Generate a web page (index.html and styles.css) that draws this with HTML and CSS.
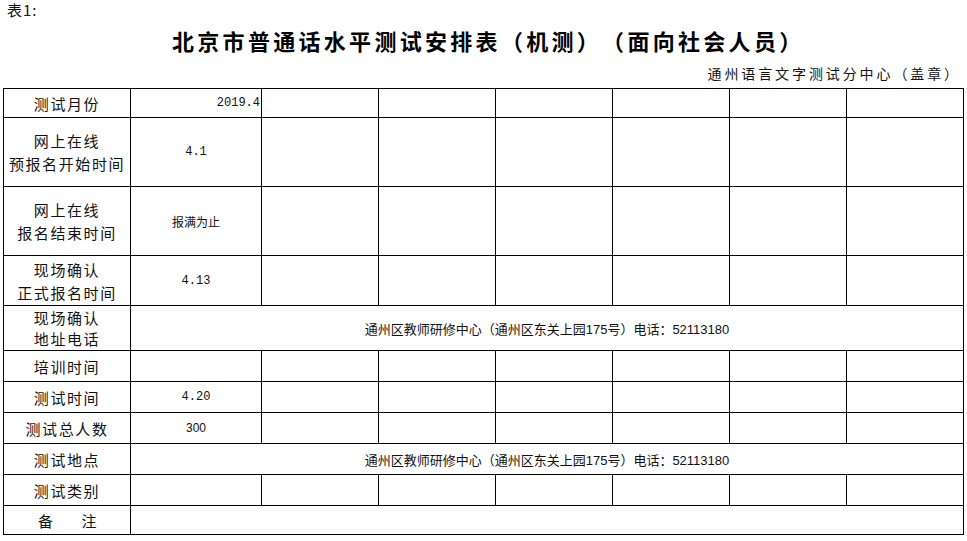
FILE: index.html
```html
<!DOCTYPE html>
<html lang="zh-CN">
<head>
<meta charset="utf-8">
<title>北京市普通话水平测试安排表</title>
<link rel="stylesheet" href="styles.css">
</head>
<body>
<div class="page">
  <div class="note">表1:</div>
  <h1 class="title">北京市普通话水平测试安排表（机测）（面向社会人员）</h1>
  <div class="org">通州语言文字测试分中心（盖章）</div>
  <table class="sheet">
    <colgroup>
      <col class="c-label">
      <col class="c-first">
      <col class="c-rest"><col class="c-rest"><col class="c-rest"><col class="c-rest"><col class="c-rest"><col class="c-rest">
    </colgroup>
    <tr class="r29">
      <td class="label">测试月份</td>
      <td class="val right mono">2019.4</td>
      <td></td><td></td><td></td><td></td><td></td><td></td>
    </tr>
    <tr class="r69">
      <td class="label">网上在线<br>预报名开始时间</td>
      <td class="val mono">4.1</td>
      <td></td><td></td><td></td><td></td><td></td><td></td>
    </tr>
    <tr class="r69">
      <td class="label">网上在线<br>报名结束时间</td>
      <td class="val">报满为止</td>
      <td></td><td></td><td></td><td></td><td></td><td></td>
    </tr>
    <tr class="r50">
      <td class="label">现场确认<br>正式报名时间</td>
      <td class="val mono">4.13</td>
      <td></td><td></td><td></td><td></td><td></td><td></td>
    </tr>
    <tr class="r45">
      <td class="label tight">现场确认<br>地址电话</td>
      <td class="val addr" colspan="7">通州区教师研修中心（通州区东关上园175号）电话：52113180</td>
    </tr>
    <tr class="r31">
      <td class="label">培训时间</td>
      <td></td><td></td><td></td><td></td><td></td><td></td><td></td>
    </tr>
    <tr class="r31">
      <td class="label">测试时间</td>
      <td class="val mono">4.20</td>
      <td></td><td></td><td></td><td></td><td></td><td></td>
    </tr>
    <tr class="r31">
      <td class="label">测试总人数</td>
      <td class="val sans-num">300</td>
      <td></td><td></td><td></td><td></td><td></td><td></td>
    </tr>
    <tr class="r31">
      <td class="label">测试地点</td>
      <td class="val addr" colspan="7">通州区教师研修中心（通州区东关上园175号）电话：52113180</td>
    </tr>
    <tr class="r31">
      <td class="label">测试类别</td>
      <td></td><td></td><td></td><td></td><td></td><td></td><td></td>
    </tr>
    <tr class="r29">
      <td class="label spread">备<span class="gap"></span>注</td>
      <td colspan="7"></td>
    </tr>
  </table>
</div>
</body>
</html>
```
FILE: styles.css
```css
html, body {
  margin: 0;
  padding: 0;
  background: #ffffff;
}

body {
  font-family: "Liberation Sans", "Noto Sans CJK SC", sans-serif;
  color: #111111;
  text-spacing-trim: space-all;
}

.page {
  width: 967px;
  height: 541px;
  overflow: hidden;
}

.note {
  height: 20px;
  line-height: 20px;
  padding-left: 7px;
  font-size: 15px;
  letter-spacing: 1px;
  font-family: "Noto Sans CJK SC", sans-serif;
}

.title {
  margin: 0;
  height: 40px;
  line-height: 40px;
  padding-left: 172px;
  font-size: 22px;
  font-weight: 700;
  letter-spacing: 3.3px;
  font-family: "Noto Sans CJK SC", sans-serif;
  color: #000000;
  white-space: nowrap;
}

.org {
  height: 26px;
  line-height: 26px;
  text-align: right;
  padding-right: 6px;
  font-size: 14px;
  letter-spacing: 2.9px;
  font-family: "Noto Sans CJK SC", sans-serif;
}

.sheet {
  margin: 2px 0 0 3px;
  border-collapse: collapse;
  table-layout: fixed;
  width: 961px;
  border: 1px solid #000;
}

.c-label { width: 127px; }
.c-first { width: 131px; }
.c-rest { width: 117px; }

.sheet td {
  border: 1px solid #000;
  padding: 0;
  vertical-align: middle;
}

.r29 { height: 29px; }
.r69 { height: 69px; }
.r50 { height: 50px; }
.r45 { height: 45px; }
.r31 { height: 31px; }

.label {
  text-align: center;
  font-size: 15px;
  line-height: 23px;
  letter-spacing: 1.6px;
  font-family: "Noto Sans CJK SC", sans-serif;
  white-space: nowrap;
}

.label.tight {
  line-height: 21px;
}

.spread {
  text-align: left;
  padding-left: 34px !important;
}

.gap {
  display: inline-block;
  width: 27px;
}

.val {
  text-align: center;
  font-size: 12px;
  font-family: "Noto Sans CJK SC", sans-serif;
}

.val.mono {
  font-family: "Liberation Mono", monospace;
  font-size: 12px;
}

.val.sans-num {
  font-family: "Liberation Sans", sans-serif;
  font-size: 12px;
}

.val.right {
  text-align: right;
  padding-right: 1px;
}

.val.addr {
  font-size: 13px;
  font-family: "Liberation Sans", "Noto Sans CJK SC", sans-serif;
  white-space: nowrap;
}
```
